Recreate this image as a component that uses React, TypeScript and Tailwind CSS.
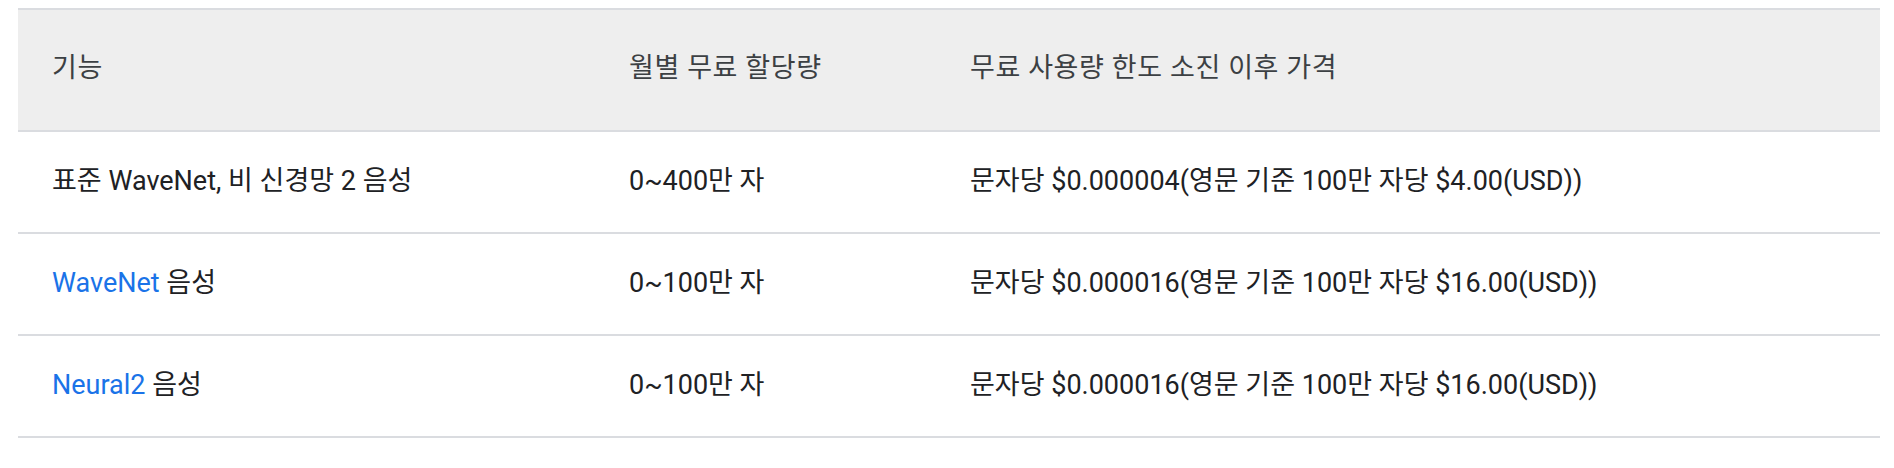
const FONT = "font-['Roboto','Noto_Sans_CJK_KR',sans-serif]"

type Row = {
  feature: React.ReactNode
  quota: string
  price: string
}

const rows: Row[] = [
  {
    feature: '표준 WaveNet, 비 신경망 2 음성',
    quota: '0~400만 자',
    price: '문자당 $0.000004(영문 기준 100만 자당 $4.00(USD))',
  },
  {
    feature: (
      <>
        <a href="#" className="text-[#1a73e8]">WaveNet</a> 음성
      </>
    ),
    quota: '0~100만 자',
    price: '문자당 $0.000016(영문 기준 100만 자당 $16.00(USD))',
  },
  {
    feature: (
      <>
        <a href="#" className="text-[#1a73e8]">Neural2</a> 음성
      </>
    ),
    quota: '0~100만 자',
    price: '문자당 $0.000016(영문 기준 100만 자당 $16.00(USD))',
  },
]

const cols = 'grid grid-cols-[577px_341px_1fr]'

export default function App() {
  return (
    <div className={`${FONT} bg-white w-[1894px] h-[468px] pt-2 pl-[18px] pr-[14px]`}>
      <div className="border-t-2 border-[#dadce0]">
        <div className={`${cols} h-[122px] bg-[#eeeeee] border-b-2 border-[#dadce0] text-[27px] tracking-[0.6px] text-[#3c4043]`}>
          <div className="flex items-center pl-[34px] pb-[3px]">기능</div>
          <div className="flex items-center pl-[34px] pb-[3px]">월별 무료 할당량</div>
          <div className="flex items-center pl-[34px] pb-[3px]">무료 사용량 한도 소진 이후 가격</div>
        </div>
        {rows.map((r, i) => (
          <div key={i} className={`${cols} h-[102px] border-b-2 border-[#dadce0] text-[27px] text-[#202124]`}>
            <div className="flex items-center pl-[34px] pb-[2px] whitespace-pre">{r.feature}</div>
            <div className="flex items-center pl-[34px] pb-[2px]">{r.quota}</div>
            <div className="flex items-center pl-[34px] pb-[2px]">{r.price}</div>
          </div>
        ))}
      </div>
    </div>
  )
}
